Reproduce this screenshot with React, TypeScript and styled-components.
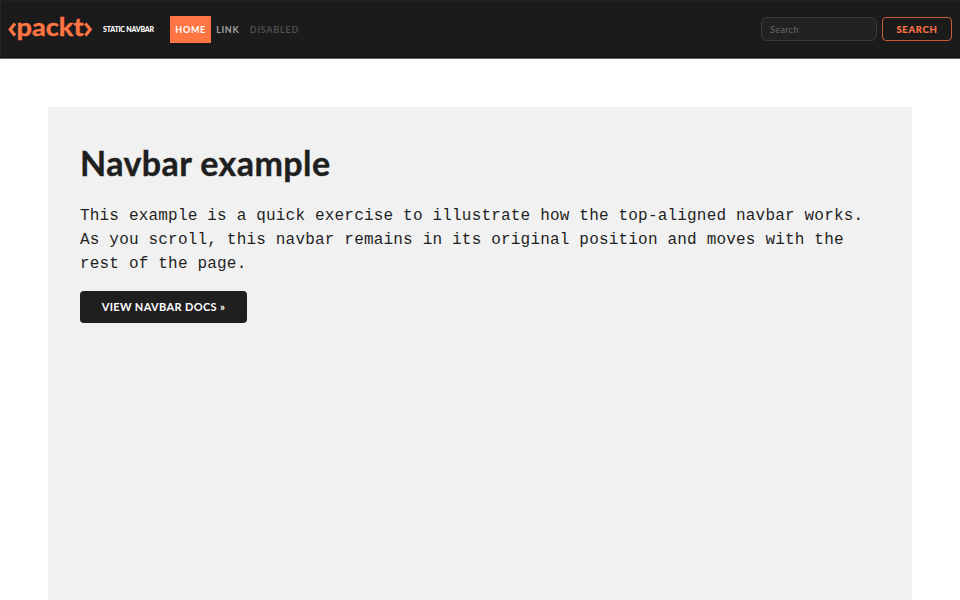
import React from "react";
import styled, { createGlobalStyle } from "styled-components";

const GlobalStyle = createGlobalStyle`
  *, *::before, *::after { box-sizing: border-box; }
  html, body { margin: 0; height: 100%; overflow: hidden; background: #fff; }
  body { font-family: Lato, "Open Sans", sans-serif; color: #1f1f1f; }
  #root { height: 100%; }
`;

const Page = styled.div`
  display: flex;
  flex-direction: column;
  height: 100%;
`;

const Navbar = styled.nav`
  display: flex;
  align-items: center;
  flex: none;
  height: 59px;
  padding: 0 8px;
  background: #1b1b1b;
  border-bottom: 1px solid #6c6c6c;
  box-shadow: inset 0 -1px 0 #0c0c0c, inset 1px 0 0 #242424, inset 0 1px 0 #222;
`;

const Logo = styled.svg`
  display: block;
  flex: none;
  width: 85px;
  height: 58px;
  margin-right: 10px;
`;

const LogoText = styled.text`
  font: 700 25px Lato, sans-serif;
  fill: #ff7544;
  stroke: #ff7544;
  stroke-width: 0.4px;
`;

const Brand = styled.a`
  width: 67px;
  color: #fff;
  font-size: 7px;
  font-weight: 900;
  line-height: 10px;
  letter-spacing: -0.2px;
  white-space: nowrap;
`;

const NavList = styled.div`
  display: flex;
  flex: 1;
`;

type LinkState = "active" | "normal" | "disabled";
const linkColors = { active: "#fff", normal: "#a3a3a3", disabled: "#4f4f4f" };

const NavLink = styled.a<{ $state: LinkState; $width: number; $spacing: number }>`
  width: ${(p) => p.$width}px;
  height: 27px;
  padding-left: 5.3px;
  color: ${(p) => linkColors[p.$state]};
  background: ${(p) => (p.$state === "active" ? "#ff7544" : "transparent")};
  font-size: 9px;
  font-weight: 700;
  line-height: 27px;
  letter-spacing: ${(p) => p.$spacing}px;
  white-space: nowrap;
`;

const SearchForm = styled.form`
  display: flex;
  align-items: center;
  gap: 5px;
`;

const SearchInput = styled.input`
  width: 116px;
  height: 24px;
  padding: 0 8px;
  border: 1px solid #3b3b3b;
  border-radius: 6px;
  background: #222;
  color: #fff;
  font: 400 9px Lato, sans-serif;
  letter-spacing: 0.4px;
  outline: none;
  &::placeholder { color: #696969; opacity: 1; }
`;

const SearchButton = styled.button`
  width: 70px;
  height: 24px;
  padding: 1px 0 0;
  border: 1px solid #c85c36;
  border-radius: 4px;
  background: transparent;
  color: #ff7544;
  font: 700 9.5px/21px Lato, sans-serif;
  letter-spacing: 0.7px;
  -webkit-text-stroke: 0.2px #ff7544;
`;

const Main = styled.main`
  flex: 1;
  margin: 48px 48px 0;
  padding: 32px;
  background: #f1f1f1;
`;

const Title = styled.h1`
  margin: 4px 0 21px;
  font-size: 34px;
  font-weight: 700;
  line-height: 40px;
  letter-spacing: 0.42px;
  white-space: nowrap;
  -webkit-text-stroke: 0.4px #1f1f1f;
`;

const Lead = styled.p`
  margin: 0 0 15px;
  font: 400 16px/24px "Liberation Mono", monospace;
  letter-spacing: 0.19px;
`;

const DocsButton = styled.a`
  display: block;
  width: 167px;
  height: 32px;
  border-radius: 4px;
  background: #1f1f1f;
  color: #fff;
  font-size: 11px;
  font-weight: 700;
  line-height: 32px;
  letter-spacing: 0.35px;
  text-align: center;
  white-space: nowrap;
`;

const PacktLogo = () => (
  <Logo viewBox="0 0 85 58" role="img" aria-label="packt">
    <g fill="none" stroke="#ff7544" strokeWidth="3.2">
      <path d="M7 23.4 L2.2 29.4 L7 35.5" />
      <path d="M77.4 23.4 L82.2 29.4 L77.4 35.5" />
    </g>
    <LogoText x="8.5" y="36" textLength="67" lengthAdjust="spacingAndGlyphs">packt</LogoText>
  </Logo>
);

export default function App() {
  return (
    <Page>
      <GlobalStyle />
      <Navbar>
        <PacktLogo />
        <Brand>STATIC NAVBAR</Brand>
        <NavList>
          <NavLink $state="active" $width={41} $spacing={0.7}>HOME</NavLink>
          <NavLink $state="normal" $width={33.5} $spacing={0.6}>LINK</NavLink>
          <NavLink $state="disabled" $width={60} $spacing={0.75}>DISABLED</NavLink>
        </NavList>
        <SearchForm>
          <SearchInput placeholder="Search" aria-label="Search" />
          <SearchButton type="button">SEARCH</SearchButton>
        </SearchForm>
      </Navbar>
      <Main>
        <Title>Navbar example</Title>
        <Lead>
          This example is a quick exercise to illustrate how the top-aligned navbar works. As you
          scroll, this navbar remains in its original position and moves with the rest of the page.
        </Lead>
        <DocsButton role="button">VIEW NAVBAR DOCS »</DocsButton>
      </Main>
    </Page>
  );
}
